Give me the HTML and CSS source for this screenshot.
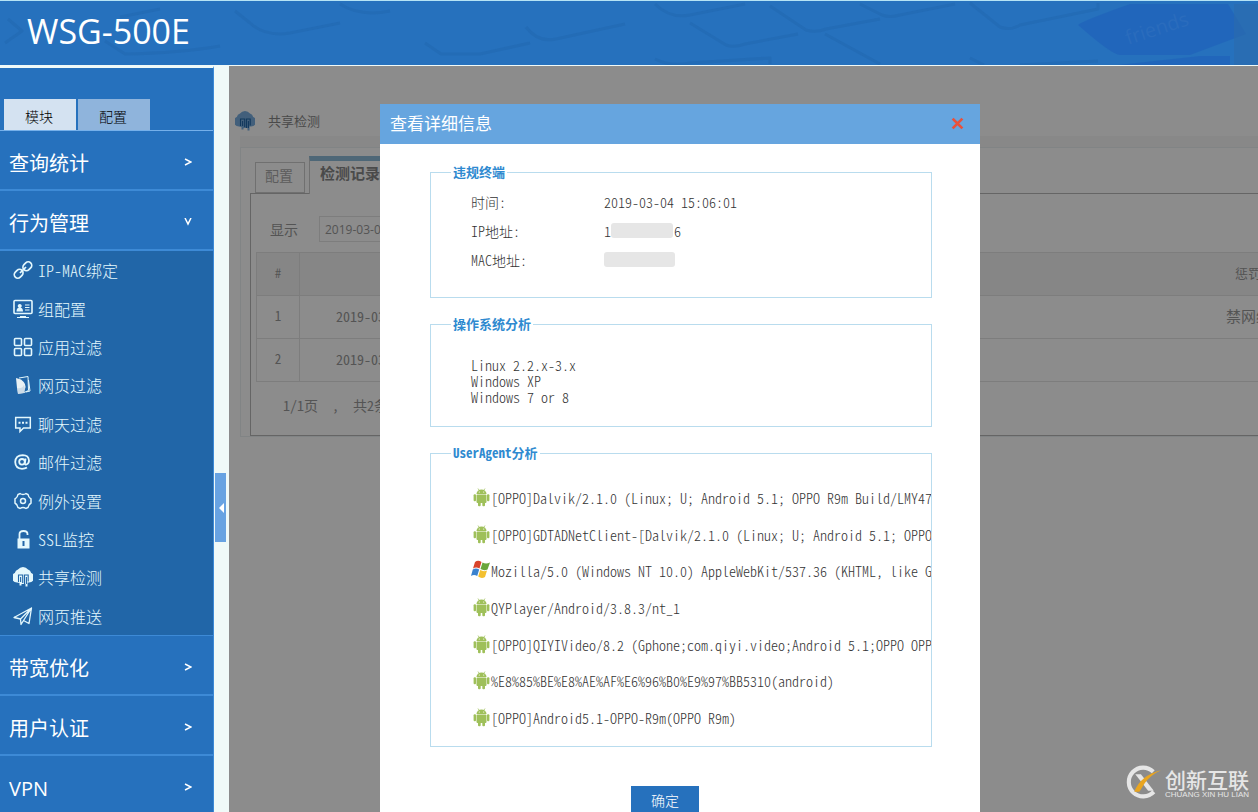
FILE: index.html
```html
<!DOCTYPE html>
<html lang="zh-CN">
<head>
<meta charset="utf-8">
<title>WSG-500E</title>
<link rel="stylesheet" href="styles.css">
</head>
<body>
<svg class="defs" aria-hidden="true">
  <symbol id="cloud" viewBox="0 0 20 20">
    <path fill="currentColor" d="M4 15.500A5 5 0 0 1 1.800 6 4.800 4.800 0 0 1 5 2.600 6.200 6.200 0 0 1 15 2.600 4.800 4.800 0 0 1 18.200 6 5 5 0 0 1 16 15.500H14.500V19.500H12.500V17H8.500V18.500H6.500V16Z"/>
    <path class="cloud-lines" fill="none" stroke-width="1.100" d="M5.500 15V8H9.700V16M7.600 10V15M11.500 17V8H15.200V14.500M13.400 10V17"/>
  </symbol>
  <symbol id="android" viewBox="0 0 17 19">
    <g fill="#9fc05a">
      <path d="M3.500 6A5 4.500 0 0 1 13.500 6Z"/>
      <rect x="3.500" y="6.600" width="10" height="8.400" rx="1"/>
      <rect x="0.600" y="6.300" width="2.400" height="7" rx="1"/>
      <rect x="14" y="6.300" width="2.400" height="7" rx="1"/>
      <rect x="5" y="13" width="2.700" height="5.300" rx="1.100"/>
      <rect x="9.300" y="13" width="2.700" height="5.300" rx="1.100"/>
    </g>
    <path stroke="#9fc05a" stroke-width=".7" d="M5 .5 6.200 2.500M12 .5 10.800 2.500"/>
    <circle cx="6.300" cy="4" r=".6" fill="#fff"/><circle cx="10.700" cy="4" r=".6" fill="#fff"/>
  </symbol>
</svg>

<header class="top">
  <svg class="keys" viewBox="0 0 1258 64" width="1258" height="64" aria-hidden="true">
    <g fill="none" stroke="#1d5fa6" stroke-opacity=".3" stroke-width="3" stroke-linejoin="round">
      <path d="M8 18 22 30 5 42M105 40 125 53Q180 52 220 45M120 16 160 8M235 10 250 22Q265 36 290 32L340 22M340 3Q360 16 390 10"/>
      <path d="M425 42 441 53H480L530 42M526 26Q538 42 556 38L625 23M655 3Q670 18 690 14L745 3M690 22 726 44Q734 47 745 43L798 33M770 5 806 29Q816 32 826 28L880 18M860 3 882 14Q890 17 900 14L955 3M825 33 880 63M970 2 1000 26Q1010 30 1020 24L1098 8V2"/>
      <path d="M655 58Q670 66 690 62L770 57V63M970 57 984 64M1020 64 1098 60"/>
    </g>
    <path fill="#2064ba" opacity=".8" d="M1078 24Q1082 20 1130 3H1228L1246 33 1190 54H1120Q1112 54 1078 24ZM1118 64 1200 55H1230V64Z"/>
    <path fill="#2c6aac" d="M1234 3H1258V64H1234Z" opacity=".6"/>
    <text class="key-text" x="1128" y="44" transform="rotate(-18 1128 44)">friends</text>
  </svg>
  <h1 class="brand">WSG-500E</h1>
</header>

<div class="shell">
  <nav class="side">
    <div class="side-tabs">
      <button class="side-tab current" type="button">模块</button>
      <button class="side-tab" type="button">配置</button>
    </div>
    <a class="group" href="#stats">查询统计<svg class="arrow" viewBox="0 0 8 8"><path d="M1 1 7 4 1 7"/></svg></a>
    <a class="group" href="#behavior">行为管理<svg class="arrow" viewBox="0 0 8 8"><path d="M1 0 4 6 7 0"/></svg></a>
    <ul class="sub">
      <li><a href="#bind"><svg viewBox="0 0 20 20"><g fill="none" stroke="currentColor" stroke-width="1.700"><rect x="9.500" y="2.800" width="9.500" height="7" rx="3.500" transform="rotate(-45 14.300 6.200)"/><rect x="1" y="10.200" width="9.500" height="7" rx="3.500" transform="rotate(-45 5.700 13.800)"/><path d="M7 13 13 7"/></g></svg>IP-MAC绑定</a></li>
      <li><a href="#group"><svg viewBox="0 0 20 20"><rect x="1" y="1.500" width="18" height="13" rx="1" fill="none" stroke="currentColor" stroke-width="1.600"/><path fill="currentColor" d="M3.500 12.500Q3.500 9 6 8.800A2 2 0 1 1 7.500 8.800Q10 9 10 12.500ZM7 17H13V18.500H7ZM4 18H16V19H4Z"/><path stroke="currentColor" d="M12 6H16.500M12 8.500H16.500M12 11H16.500"/></svg>组配置</a></li>
      <li><a href="#apps"><svg viewBox="0 0 20 20"><g fill="none" stroke="currentColor" stroke-width="1.600"><rect x="1.500" y="1.500" width="7" height="7" rx="1"/><rect x="11.500" y="1.500" width="7" height="7" rx="1"/><rect x="1.500" y="11.500" width="7" height="7" rx="1"/><rect x="11.500" y="11.500" width="7" height="7" rx="1"/></g></svg>应用过滤</a></li>
      <li><a href="#web"><svg viewBox="0 0 20 20"><path fill="none" stroke="currentColor" d="M6 3 15 1.500 15.500 15.500 11 17.500M15.500 5 17 16 13 17"/><path fill="#e9f1f4" d="M3 3 8 4.500Q14 9 12 14L11 18 5 19 4 13Z"/><path fill="#b9cddd" d="M4 13Q9 14 11 10L12 14 11 18 5 19Z" opacity=".6"/></svg>网页过滤</a></li>
      <li><a href="#chat"><svg viewBox="0 0 20 20"><path fill="none" stroke="currentColor" stroke-width="1.500" d="M2.700 3.500H17.300V14H10.500L7 17.500V14H2.700Z"/><path stroke="currentColor" stroke-width="2" stroke-dasharray="2 1.500" d="M5.500 8.800H15"/></svg>聊天过滤</a></li>
      <li><a href="#mail"><svg viewBox="0 0 20 20"><g fill="none" stroke="currentColor" stroke-width="1.800"><circle cx="9" cy="9.800" r="2.800"/><path d="M12.600 6.500 11.800 11.500Q12 13 13.500 12.500 16 11.500 16 8.500 15.500 3.200 9.800 3.200 2.500 3.500 2.200 10 2.500 16.500 9 16.800 12 16.800 14 15.500"/></g></svg>邮件过滤</a></li>
      <li><a href="#except"><svg viewBox="0 0 20 20"><g fill="none" stroke="currentColor" stroke-width="1.500"><path d="M7 2.500Q10 4.500 13 2.500L15 3.500Q15.500 6.500 18 8V12Q15.500 13.500 15 16.500L13 17.500Q10 15.500 7 17.500L5 16.500Q4.500 13.500 2 12V8Q4.500 6.500 5 3.500Z"/><circle cx="10" cy="10" r="2.500"/></g></svg>例外设置</a></li>
      <li><a href="#ssl"><svg viewBox="0 0 20 20"><path fill="none" stroke="currentColor" stroke-width="1.800" d="M6.500 10V5Q6.500 2 10.500 2T14.500 5V6"/><path fill="currentColor" fill-rule="evenodd" d="M4.500 9.500H16.500V19.500H4.500ZM9.500 12V17H11.500V12Z"/></svg>SSL监控</a></li>
      <li><a href="#share"><svg><use href="#cloud"/></svg>共享检测</a></li>
      <li><a href="#push"><svg viewBox="0 0 20 20"><path fill="none" stroke="currentColor" stroke-width="1.300" stroke-linejoin="round" d="M1 11.500 18.500 2 16 17.500 10.500 14.500 8 18.500 7.500 13ZM7.500 13 18.500 2 10.500 14.500"/></svg>网页推送</a></li>
    </ul>
    <a class="group" href="#bandwidth">带宽优化<svg class="arrow" viewBox="0 0 8 8"><path d="M1 1 7 4 1 7"/></svg></a>
    <a class="group" href="#auth">用户认证<svg class="arrow" viewBox="0 0 8 8"><path d="M1 1 7 4 1 7"/></svg></a>
    <a class="group" href="#vpn">VPN<svg class="arrow" viewBox="0 0 8 8"><path d="M1 1 7 4 1 7"/></svg></a>
  </nav>
  <div class="gutter"><button class="collapse" type="button" aria-label="收起菜单"></button></div>

  <main class="main">
    <div class="title"><svg class="title-icon"><use href="#cloud"/></svg>共享检测</div>
    <section class="panel">
      <div class="tabs">
        <button class="tab" type="button">配置</button>
        <button class="tab active" type="button">检测记录</button>
      </div>
      <div class="records">
        <div class="filter"><label for="day">显示</label><input id="day" type="text" value="2019-03-04"></div>
        <table class="grid">
          <tr><th class="num">#</th><th class="time"></th><th class="action">惩罚</th></tr>
          <tr><td class="num">1</td><td class="time">2019-03-04</td><td class="ban">禁网络</td></tr>
          <tr><td class="num">2</td><td class="time">2019-03-04</td><td></td></tr>
        </table>
        <div class="pager"><span>1/1页</span><span>，</span><span>共2条</span></div>
      </div>
    </section>
    <div class="mask"></div>

    <div class="dialog" role="dialog" aria-labelledby="dlg-title">
      <div class="dialog-head">
        <h2 id="dlg-title">查看详细信息</h2>
        <button class="close" type="button" aria-label="关闭"><svg viewBox="0 0 12 12"><path d="M1.500 1.500 10.500 10.500M10.500 1.500 1.500 10.500"/></svg></button>
      </div>
      <div class="dialog-body">
        <fieldset class="box">
          <legend>违规终端</legend>
          <dl class="facts">
            <dt>时间:</dt><dd>2019-03-04 15:06:01</dd>
            <dt>IP地址:</dt><dd>1<span class="blur ip"></span>6</dd>
            <dt>MAC地址:</dt><dd><span class="blur mac"></span></dd>
          </dl>
        </fieldset>
        <fieldset class="box">
          <legend>操作系统分析</legend>
          <ul class="systems"><li>Linux 2.2.x-3.x</li><li>Windows XP</li><li>Windows 7 or 8</li></ul>
        </fieldset>
        <fieldset class="box">
          <legend>UserAgent分析</legend>
          <ul class="agents">
            <li><svg><use href="#android"/></svg>[OPPO]Dalvik/2.1.0 (Linux; U; Android 5.1; OPPO R9m Build/LMY47</li>
            <li><svg><use href="#android"/></svg>[OPPO]GDTADNetClient-[Dalvik/2.1.0 (Linux; U; Android 5.1; OPPO</li>
            <li><svg class="win" viewBox="0 0 20 19"><path fill="#d8432a" d="M4 2Q7-.5 10.500 2L8.500 8.500Q5 6.500 2 8.500Z"/><path fill="#69a63a" d="M11.500 2.500Q15 4.500 19 2.500L16.500 9.500Q13 11 9.500 9Z"/><path fill="#3a82cf" d="M1.800 9.500Q5 7.500 8.200 9.500L6.200 16Q3 14 0 16Z"/><path fill="#f3c02f" d="M9.200 10Q12.500 12 16 10.500L14 17Q10.500 19 7.200 16.500Z"/></svg>Mozilla/5.0 (Windows NT 10.0) AppleWebKit/537.36 (KHTML, like G</li>
            <li><svg><use href="#android"/></svg>QYPlayer/Android/3.8.3/nt_1</li>
            <li><svg><use href="#android"/></svg>[OPPO]QIYIVideo/8.2 (Gphone;com.qiyi.video;Android 5.1;OPPO OPP</li>
            <li><svg><use href="#android"/></svg>%E8%85%BE%E8%AE%AF%E6%96%B0%E9%97%BB5310(android)</li>
            <li><svg><use href="#android"/></svg>[OPPO]Android5.1-OPPO-R9m(OPPO R9m)</li>
          </ul>
        </fieldset>
        <button class="ok" type="button">确定</button>
      </div>
    </div>

    <div class="mark">
      <svg viewBox="0 0 36 34"><path fill="none" stroke="#e6e6e6" stroke-width="4" d="M27.500 6.500A14 14 0 1 0 28 26"/><path fill="#e6e6e6" d="M10 9H15.500L28 25H22.500Z"/><path fill="#e9a520" d="M35 5Q24 10 19 18L14 26H9Q15 10 35 5Z"/></svg>
      <div><div class="mark-name">创新互联</div><div class="mark-sub">CHUANG XIN HU LIAN</div></div>
    </div>
  </main>
</div>
</body>
</html>
```
FILE: styles.css
```css
* { box-sizing: border-box; }
body {
  margin: 0;
  height: 100vh;
  display: flex;
  flex-direction: column;
  overflow: hidden;
  background: #f0faf8;
  color: #444;
  font: 300 14px/16px "Noto Sans CJK SC", sans-serif;
  font-feature-settings: "hwid";
}
button, input { font: inherit; font-feature-settings: inherit; border: 0; padding: 0; }
ul, dl { margin: 0; padding: 0; list-style: none; }
a { color: inherit; text-decoration: none; }
.defs { position: absolute; width: 0; height: 0; }

.top {
  position: relative;
  flex: none;
  height: 66px;
  background: #2671bd;
  border-top: 1px solid #b5e3f5;
  border-bottom: 1px solid #f0faf8;
  overflow: hidden;
}
.keys { position: absolute; top: 0; right: 0; }
.key-text { font: 20px "Open Sans", sans-serif; fill: #2a6cbd; }
.brand {
  position: relative;
  margin: 0;
  padding: 6px 27px;
  color: #fff;
  font: 400 34px/48px "Open Sans", sans-serif;
  font-feature-settings: normal;
}

.shell { flex: 1; min-height: 0; display: flex; }
.side {
  flex: none;
  width: 214px;
  border-top: 2px solid #f0faf8;
  background: #2671bd;
  border-right: 1px solid #3d8ad6;
  color: #fff;
  overflow: hidden;
}
.side-tabs { display: flex; gap: 2px; padding: 31px 4px 0; border-bottom: 1px solid #75b0ea; }
.side-tab { width: 72px; height: 31px; padding: 2px 2px 0 0; background: #8fb4dc; color: #000; }
.side-tab.current { background: #d4e2f1; }
.group {
  display: flex;
  align-items: center;
  justify-content: space-between;
  height: 60px;
  padding: 7px 21px 0 9px;
  border-bottom: 2px solid #3d8ad6;
  font: 400 20px/24px "Open Sans", "Noto Sans CJK SC", sans-serif;
  font-feature-settings: normal;
}
.arrow { width: 8px; height: 8px; margin-bottom: 4px; fill: none; stroke: #fff; stroke-width: 1.5; }
.sub {
  display: grid;
  grid-template-rows: repeat(10, 1fr);
  height: 385px;
  background: #2166a8;
  border-bottom: 1px solid #3d8ad6;
  color: #e4f8fd;
  font-size: 16px;
}
.sub li, .sub a { display: flex; align-items: center; }
.sub a { gap: 5px; padding-left: 13px; }
.sub svg { width: 20px; height: 20px; }
.cloud-lines { stroke: #2166a8; }
.gutter { flex: none; width: 15px; padding: 407px 0 0 1px; }
.collapse { display: flex; align-items: center; justify-content: flex-end; width: 11px; height: 69px; background: #68a3e2; padding-right: 2px; }
.collapse::after { content: ""; border: 5px solid transparent; border-left: 0; border-right-color: #fff; }

.main { position: relative; flex: 1; min-width: 0; background: #fff; overflow: hidden; color: #999; font-weight: 400; }
.title { display: flex; align-items: center; gap: 13px; height: 70px; padding: 40px 6px 0; font-size: 13px; color: #888; }
.title-icon { width: 20px; height: 20px; color: #78aee0; }
.title .cloud-lines, .title-icon { stroke: #fff; stroke-width: 0; }
.panel { margin: 11px 0 0 11px; padding: 8px 0 0 10px; border: 1px solid #ebf0f2; border-right: 0; box-shadow: 0 -11px #f7f7f7; }
.tabs { display: flex; align-items: flex-end; gap: 4px; padding-left: 4px; height: 38px; margin-bottom: -1px; }
.tab { width: 50px; height: 31px; margin-bottom: 1px; padding: 0 2px 6px 0; background: transparent; border: 1px solid #ccc; color: #aaa; }
.tab.active { width: 84px; height: 38px; margin: 0; padding-bottom: 9px; position: relative; background: #fff; border-top: 5px solid #8fbcd9; border-bottom: 0; color: #888; font-size: 15px; font-weight: 700; }
.records { border: 1px solid #b8b8b8; border-right: 0; padding: 22px 0 0 5px; height: 243px; margin-left: -1px; }
.filter { display: flex; align-items: center; gap: 21px; padding-left: 14px; }
.filter input { width: 110px; height: 26px; padding-left: 5px; border: 1px solid #e3e3e3; color: #999; background: #fff; font-size: 12px; font-family: "Open Sans", sans-serif; font-feature-settings: normal; }
.grid { width: 100%; margin-top: 10px; table-layout: fixed; border-collapse: collapse; }
.grid tr { height: 43px; }
.grid th { background: #f5f5f5; font-weight: 400; }
.grid th, .grid td { padding: 0 0 2px; border: 1px solid #e3e3e3; text-align: left; white-space: nowrap; overflow: hidden; }
.grid tr > :last-child { border-right: 0; }
.grid tr > .num { width: 43px; text-align: center; font-size: 13px; }
.grid tr > .time { width: 600px; padding-left: 36px; }
.grid tr > .action { padding-left: 335px; font-size: 13px; }
.grid tr > .ban { padding-left: 326px; font-size: 15px; }
.pager { display: flex; gap: 14px; padding: 15px 27px; }
.mask { position: absolute; inset: 0; background: rgba(0, 0, 0, .45); }

.dialog { position: absolute; top: 38px; left: 151px; width: 600px; background: #fff; color: #444; }
.dialog-head { display: flex; align-items: center; justify-content: space-between; height: 40px; padding: 0 16px 2px 10px; background: #66a5df; }
.dialog-head h2 { margin: 0; color: #fff; font-size: 17px; font-weight: 400; }
.close { display: flex; background: transparent; }
.close svg { width: 13px; height: 13px; stroke: #e8513c; stroke-width: 2.5; }
.dialog-body { display: flex; flex-direction: column; padding: 20px 48px 20px 50px; font-weight: 300; }
.box { min-width: 0; margin: 0 0 18px; padding: 0 0 0 20px; border: 1px solid #b9dcee; color: #333; }
.box legend { padding: 0 2px; color: #2f8ad0; font-size: 13px; font-weight: 700; }
.facts { display: grid; grid-template-columns: 133px 1fr; grid-auto-rows: 29px; align-items: center; padding: 7px 0 23px 20px; }
.facts dd { display: flex; align-items: center; margin: 0; }
.blur { height: 15px; background: #e6e6e6; border-radius: 3px; }
.blur.ip { width: 62px; margin-right: 1px; }
.blur.mac { width: 71px; }
.systems { padding: 25px 0 21px 20px; }
.agents { display: grid; grid-auto-rows: 1fr; height: 256px; margin: 19px 0 10px 20px; overflow: hidden; white-space: nowrap; }
.agents li { display: flex; align-items: center; }
.agents svg { flex: none; width: 17px; height: 19px; margin: 0 1px 1px 2px; }
.agents .win { width: 20px; margin: 0 0 4px; }
.ok { align-self: center; width: 68px; height: 30px; margin: 21px 32px 0 0; padding-bottom: 3px; background: #2671bd; color: #fff; }

.mark { position: absolute; right: 9px; bottom: 12px; display: flex; align-items: center; gap: 3px; color: #e6e6e6; }
.mark svg { width: 37px; height: 35px; }
.mark-name { font-size: 21px; font-weight: 500; line-height: 24px; }
.mark-sub { font: 8px/8px "Liberation Sans", sans-serif; font-feature-settings: normal; }
```
